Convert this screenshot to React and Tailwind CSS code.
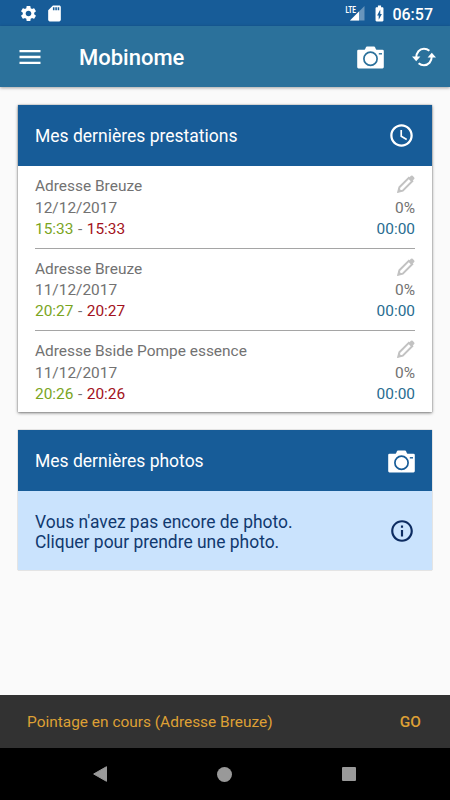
import React from "react";
import { MdSettings, MdSdCard, MdBatteryChargingFull, MdAccessTime, MdInfoOutline, MdMenu } from "react-icons/md";

const visits = [
  { name: "Adresse Breuze", date: "12/12/2017", start: "15:33", end: "15:33" },
  { name: "Adresse Breuze", date: "11/12/2017", start: "20:27", end: "20:27" },
  { name: "Adresse Bside Pompe essence", date: "11/12/2017", start: "20:26", end: "20:26" },
];

function Camera({ hole }) {
  return (
    <svg width="27" height="23" viewBox="0 0 27 23" className="block shrink-0">
      <path
        fill="#fff"
        d="M1.5 3.8H6.8C7.8 3.8 8.1 3.3 8.5 2.3L8.8 1.5Q9.2.6 10 .6H17Q17.8.6 18.2 1.5L18.5 2.3C18.9 3.3 19.2 3.8 20.2 3.8H25.5Q26.8 3.8 26.8 5.1V21Q26.8 22.4 25.5 22.4H1.5Q.2 22.4.2 21V5.1Q.2 3.8 1.5 3.8Z"
      />
      <circle cx="13.5" cy="12.8" r="6.6" fill="none" stroke={hole} strokeWidth="1.7" />
      <path d="M21.8 7.8h3.2" stroke={hole} strokeWidth="1.4" />
    </svg>
  );
}

function Refresh() {
  return (
    <svg width="24" height="20" viewBox="0 0 24 20" className="block shrink-0">
      <g fill="none" stroke="#fff" strokeWidth="2">
        <path d="M4.2 11C4.2 5.2 7.6 1.8 12 1.8Q15 1.8 17.4 3.8" />
        <path d="M19.8 9C19.8 14.8 16.4 18.2 12 18.2Q9 18.2 6.6 16.2" />
      </g>
      <path fill="#fff" d="M0 9.4H8.4L4.2 14.2ZM15.6 10.6H24L19.8 5.8Z" />
    </svg>
  );
}

function Pencil() {
  return (
    <svg width="18" height="18" viewBox="0 0 18 18" className="block">
      <path d="M2.4 12.2 11.8 2.8 15.2 6.2 5.8 15.6 1.3 16.7Z" fill="none" stroke="#c2c2c2" strokeWidth="2" />
      <path d="M11.6 3 14 .8Q14.8.2 15.6.8L17.2 2.4Q17.9 3.2 17.2 4L15 6.4Z" fill="#c2c2c2" />
      <path d="M.6 17.4 1.8 12.9 5.1 16.2Z" fill="#c2c2c2" />
    </svg>
  );
}

export default function App() {
  return (
    <div className="flex h-[800px] w-[450px] flex-col overflow-hidden bg-[#fafafa] font-[Roboto,sans-serif]">
      <div className="flex h-[26px] shrink-0 items-center bg-[#175c98] pl-[19px] pr-[17px] text-white">
        <MdSettings size={19} />
        <MdSdCard size={19} className="ml-[7px]" />
        <svg width="20" height="18" viewBox="0 0 20 18" className="ml-auto block">
          <path d="M19.5 2V16.5H5Z" fill="#fff" fillOpacity=".35" />
          <path d="M14 7.5V16.5H5Z" fill="#fff" />
          <text x="0.5" y="8.6" fontSize="9.5" fontWeight="700" textLength="10.5" lengthAdjust="spacingAndGlyphs" fill="#fff">LTE</text>
        </svg>
        <MdBatteryChargingFull size={19} className="ml-[5px]" />
        <span className="ml-[3px] pt-[3px] text-[16px] font-medium leading-none">06:57</span>
      </div>

      <header className="z-10 flex h-[61px] shrink-0 items-center bg-[#2b719b] pl-[16px] pr-[14px] shadow-[0_1px_3px_rgba(0,0,0,0.35)]">
        <MdMenu size={28} color="#fff" />
        <h1 className="ml-[35px] pt-[2px] text-[22px] font-medium leading-none text-white">Mobinome</h1>
        <div className="ml-auto flex items-center gap-[28px]">
          <div className="pt-[2px]">
            <Camera hole="#2b719b" />
          </div>
          <Refresh />
        </div>
      </header>

      <main className="flex-1 px-[18px] pt-[18px]">
        <section className="h-[307px] bg-white shadow-[0_0_1px_rgba(0,0,0,0.4),0_1px_3px_rgba(0,0,0,0.5)]">
          <div className="flex h-[61px] items-center justify-between bg-[#175c98] pl-[17px] pr-[17px] text-white">
            <h2 className="pt-[2px] text-[17.5px] leading-none">Mes dernières prestations</h2>
            <MdAccessTime size={27} />
          </div>
          <div className="px-[17px] text-[15.45px] leading-[21.3px] text-[#727272]">
            {visits.map((v, i) => (
              <div
                key={i}
                className="flex h-[82.5px] justify-between border-b border-[#a5a5a5] pt-[10.4px] last:border-b-0"
              >
                <div>
                  <div>{v.name}</div>
                  <div>{v.date}</div>
                  <div>
                    <span className="text-[#7aa51e]">{v.start}</span>
                    <span className="mx-[4.5px]">-</span>
                    <span className="text-[#a31220]">{v.end}</span>
                  </div>
                </div>
                <div className="flex flex-col items-end">
                  <div className="-mt-[1px] h-[22.3px]">
                    <Pencil />
                  </div>
                  <div>0%</div>
                  <div className="text-[#286c90]">00:00</div>
                </div>
              </div>
            ))}
          </div>
        </section>

        <section className="mt-[18px] h-[140px] bg-[#cae3fd] shadow-[0_0_1px_rgba(0,0,0,0.5)]">
          <div className="flex h-[61px] items-center justify-between bg-[#175c98] pl-[17px] pr-[17px] text-white">
            <h2 className="pt-[2px] text-[17.5px] leading-none">Mes dernières photos</h2>
            <div className="pt-[2px]">
              <Camera hole="#175c98" />
            </div>
          </div>
          <div className="flex h-[79px] items-center justify-between px-[17px] text-[#11396f]">
            <p className="pt-[3px] text-[17.45px] leading-[20.5px]">
              Vous n'avez pas encore de photo.
              <br />
              Cliquer pour prendre une photo.
            </p>
            <MdInfoOutline size={26} color="#0d2c61" />
          </div>
        </section>
      </main>

      <div className="flex h-[53px] shrink-0 items-center justify-between bg-[#323232] pl-[27px] pr-[29px] pt-[2px] text-[15.45px] text-[#dea035]">
        <span>Pointage en cours (Adresse Breuze)</span>
        <span className="font-medium">GO</span>
      </div>
      <nav className="flex h-[52px] shrink-0 items-center justify-between bg-black pl-[93px] pr-[94px]">
        <svg width="14" height="16" viewBox="0 0 14 16">
          <path d="M13.5.7V15.3L.7 8Z" fill="#999" stroke="#999" strokeLinejoin="round" />
        </svg>
        <div className="size-[15px] rounded-full bg-[#999]" />
        <div className="size-[14px] rounded-[1px] bg-[#999]" />
      </nav>
    </div>
  );
}
